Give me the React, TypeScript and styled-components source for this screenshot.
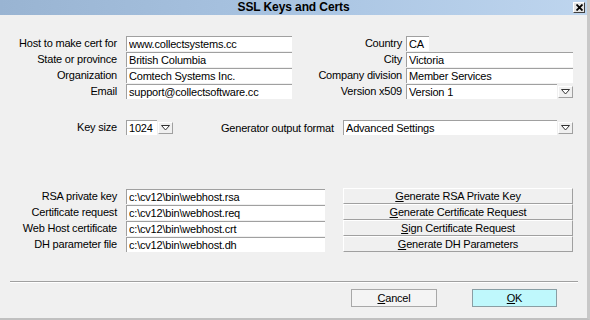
import React from "react";
import styled, { createGlobalStyle } from "styled-components";

const GlobalStyle = createGlobalStyle`
  html, body {
    margin: 0;
    padding: 0;
    background: #f0f0f0;
  }
  body {
    font-family: "Liberation Sans", Arial, sans-serif;
    font-size: 11px;
    letter-spacing: -0.2px;
    color: #000;
  }
`;

const Arrow = () => (
  <svg width="9" height="6" viewBox="0 0 9 6">
    <path d="M0.5 0.5 H8.5 L4.5 5 Z" fill="#fff" stroke="#333" strokeWidth="1" />
  </svg>
);

const CloseIcon = () => (
  <svg width="7" height="7" viewBox="0 0 7 7">
    <path d="M0.5 0.5 L6.5 6.5 M6.5 0.5 L0.5 6.5" stroke="#000" strokeWidth="1.8" />
  </svg>
);

const App = () => {
  return (
    <>
      <GlobalStyle />
      <Window>
        <TitleBar>
          <Title>SSL Keys and Certs</Title>
          <CloseBox>
            <CloseIcon />
          </CloseBox>
        </TitleBar>

        <TopGrid>
          <Label $pad={9}>Host to make cert for</Label>
          <Field readOnly value="www.collectsystems.cc" />
          <Label $pad={4}>Country</Label>
          <Field readOnly value="CA" $w={23} />

          <Label $pad={9}>State or province</Label>
          <Field readOnly value="British Columbia" />
          <Label $pad={4}>City</Label>
          <Field readOnly value="Victoria" />

          <Label $pad={9}>Organization</Label>
          <Field readOnly value="Comtech Systems Inc." />
          <Label $pad={4}>Company division</Label>
          <Field readOnly value="Member Services" />

          <Label $pad={9}>Email</Label>
          <Field readOnly value="support@collectsoftware.cc" />
          <Label $pad={4}>Version x509</Label>
          <Combo>
            <Field readOnly value="Version 1" />
            <ArrowButton>
              <Arrow />
            </ArrowButton>
          </Combo>
        </TopGrid>

        <KeyRow>
          <Label $pad={9} $w={126}>Key size</Label>
          <Combo $w={47}>
            <Field readOnly value="1024" />
            <ArrowButton>
              <Arrow />
            </ArrowButton>
          </Combo>
          <GenLabel>Generator output format</GenLabel>
          <Combo $w={230}>
            <Field readOnly value="Advanced Settings" />
            <ArrowButton>
              <Arrow />
            </ArrowButton>
          </Combo>
        </KeyRow>

        <FileGrid>
          <Label $pad={9}>RSA private key</Label>
          <Field readOnly value="c:\cv12\bin\webhost.rsa" $w={199} />
          <ActionButton>
            <u>G</u>enerate RSA Private Key
          </ActionButton>

          <Label $pad={9}>Certificate request</Label>
          <Field readOnly value="c:\cv12\bin\webhost.req" $w={199} />
          <ActionButton>
            <u>G</u>enerate Certificate Request
          </ActionButton>

          <Label $pad={9}>Web Host certificate</Label>
          <Field readOnly value="c:\cv12\bin\webhost.crt" $w={199} />
          <ActionButton>
            <u>S</u>ign Certificate Request
          </ActionButton>

          <Label $pad={9}>DH parameter file</Label>
          <Field readOnly value="c:\cv12\bin\webhost.dh" $w={199} />
          <ActionButton>
            <u>G</u>enerate DH Parameters
          </ActionButton>
        </FileGrid>

        <Separator />

        <Footer>
          <DialogButton $w={86}>
            <u>C</u>ancel
          </DialogButton>
          <DialogButton $w={85} $primary>
            <u>O</u>K
          </DialogButton>
        </Footer>
      </Window>
    </>
  );
};

export default App;

const Window = styled.div`
  width: 590px;
  height: 320px;
  box-sizing: border-box;
  border-right: 3px solid #c8c8c8;
  border-bottom: 2px solid #c0c0c0;
  background: #f0f0f0;
  display: flex;
  flex-direction: column;
  overflow: hidden;
`;

const TitleBar = styled.div`
  height: 15px;
  flex-shrink: 0;
  display: grid;
  grid-template-columns: 1fr auto 1fr;
  align-items: center;
  background: linear-gradient(90deg, #99b4d2 0%, #a9c4e2 50%, #bed5ee 100%);
`;

const Title = styled.div`
  grid-column: 2;
  font-size: 12px;
  font-weight: bold;
  letter-spacing: -0.1px;
  line-height: 15px;
`;

const CloseBox = styled.div`
  grid-column: 3;
  justify-self: end;
  margin-right: 2px;
  width: 12px;
  height: 11px;
  box-sizing: border-box;
  border: 1px solid;
  border-color: #fff #404040 #404040 #fff;
  background: #e4e4e4;
  display: flex;
  align-items: center;
  justify-content: center;
`;

const TopGrid = styled.div`
  display: grid;
  grid-template-columns: 126px 166px 114px 167px;
  grid-auto-rows: 15px;
  row-gap: 1px;
  margin-top: 21px;
`;

const Label = styled.div<{ $pad: number; $w?: number }>`
  text-align: right;
  padding-right: ${(p) => p.$pad}px;
  ${(p) => (p.$w ? `width: ${p.$w}px; flex-shrink: 0;` : "")}
  box-sizing: border-box;
  line-height: 15px;
  white-space: nowrap;
`;

const Field = styled.input<{ $w?: number }>`
  width: ${(p) => (p.$w ? `${p.$w}px` : "100%")};
  min-width: 0;
  height: 15px;
  box-sizing: border-box;
  margin: 0;
  border: none;
  border-top: 1px solid #a0a0a0;
  border-left: 1px solid #a0a0a0;
  background: #fff;
  font: inherit;
  letter-spacing: inherit;
  color: #000;
  padding: 0 0 0 2px;
  outline: none;
`;

const Combo = styled.div<{ $w?: number }>`
  display: flex;
  align-items: center;
  gap: 1px;
  height: 15px;
  ${(p) => (p.$w ? `width: ${p.$w}px; flex-shrink: 0;` : "")}
`;

const ArrowButton = styled.div`
  width: 15px;
  height: 12px;
  flex-shrink: 0;
  box-sizing: border-box;
  border: 1px solid;
  border-color: #fff #a0a0a0 #a0a0a0 #fff;
  background: #f0f0f0;
  display: flex;
  align-items: center;
  justify-content: center;
`;

const KeyRow = styled.div`
  display: flex;
  align-items: center;
  height: 15px;
  margin-top: 21px;
`;

const GenLabel = styled.div`
  margin-left: 48px;
  width: 122px;
  flex-shrink: 0;
  white-space: nowrap;
`;

const FileGrid = styled.div`
  display: grid;
  grid-template-columns: 126px 217px 230px;
  grid-auto-rows: 16px;
  margin-top: 53px;
  align-items: center;
`;

const ActionButton = styled.button`
  height: 16px;
  box-sizing: border-box;
  margin: 0;
  padding: 0;
  font: inherit;
  letter-spacing: inherit;
  color: #000;
  background: #f0f0f0;
  border: 1px solid;
  border-color: #fff #a0a0a0 #a0a0a0 #fff;
  text-align: center;
  line-height: 13px;
`;

const Separator = styled.div`
  margin: 29px 0 0 10px;
  width: 568px;
  border-top: 1px solid #a0a0a0;
  border-bottom: 1px solid #fff;
`;

const Footer = styled.div`
  display: flex;
  gap: 35px;
  margin-top: 6px;
  padding-left: 351px;
`;

const DialogButton = styled.button<{ $w: number; $primary?: boolean }>`
  width: ${(p) => p.$w}px;
  height: 18px;
  box-sizing: border-box;
  margin: 0;
  padding: 0;
  font: inherit;
  letter-spacing: inherit;
  color: #000;
  background: ${(p) => (p.$primary ? "#bff8fc" : "#f4f4f4")};
  border: 1px solid ${(p) => (p.$primary ? "#8a9ea4" : "#a8a8a8")};
`;
